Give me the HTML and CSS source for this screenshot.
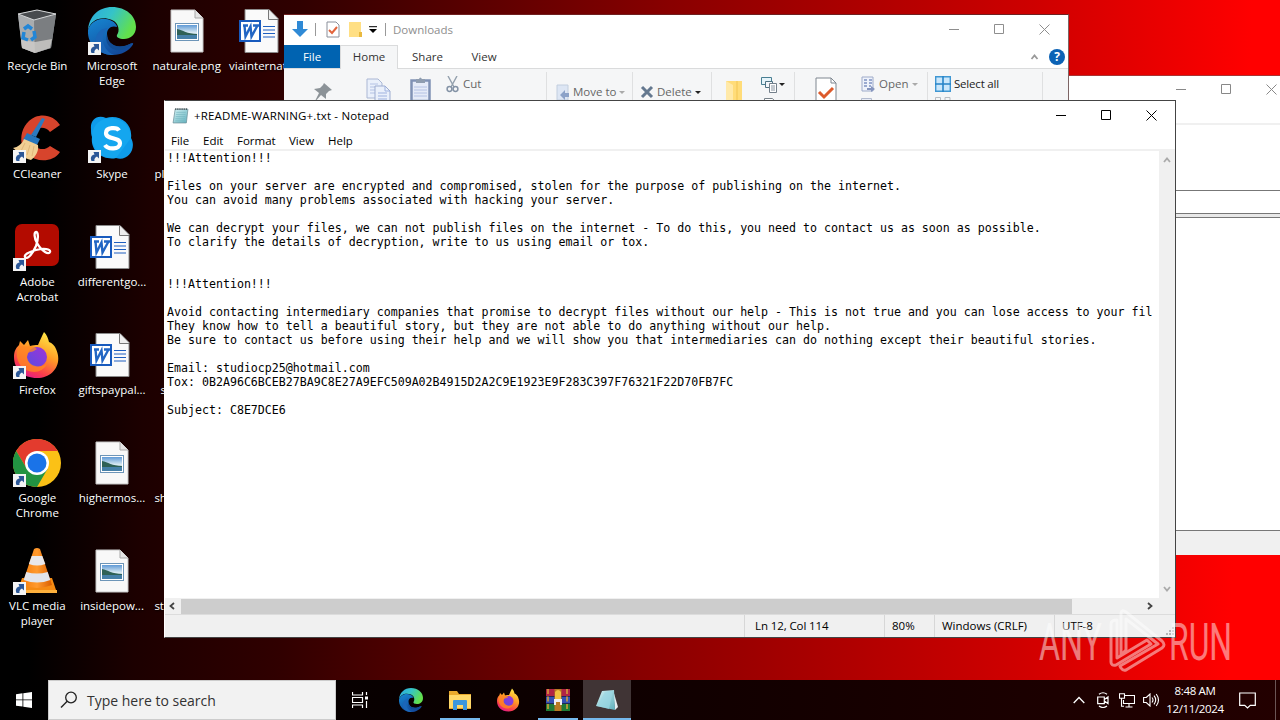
FILE: index.html
```html
<!DOCTYPE html>
<html lang="en">
<head>
    <meta charset="UTF-8">
    <meta name="viewport" content="width=device-width, initial-scale=1.0">
    <title>Desktop</title>
    <link rel="stylesheet" href="styles.css">
</head>
<body>
    <!-- Shared icons -->
    <svg class="defs" width="0" height="0">
        <defs>
            <linearGradient id="edgeTop" x1="0" y1="0" x2="1" y2="0.4">
                <stop offset="0" stop-color="#2aa9e0"/><stop offset=".5" stop-color="#35c3c8"/><stop offset="1" stop-color="#62e04c"/>
            </linearGradient>
            <linearGradient id="edgeLow" x1="0" y1="0" x2="0.6" y2="1">
                <stop offset="0" stop-color="#1687d2"/><stop offset="1" stop-color="#134a9c"/>
            </linearGradient>
            <linearGradient id="fox" x1="0.8" y1="0" x2="0.3" y2="1">
                <stop offset="0" stop-color="#fff04a"/><stop offset=".45" stop-color="#ff9a26"/><stop offset=".8" stop-color="#fa3c4c"/><stop offset="1" stop-color="#e01a8c"/>
            </linearGradient>
            <linearGradient id="foxCore" x1="0" y1="1" x2="1" y2="0">
                <stop offset="0" stop-color="#5a4be0"/><stop offset="1" stop-color="#a033d8"/>
            </linearGradient>
            <linearGradient id="sky" x1="0" y1="0" x2="0" y2="1">
                <stop offset="0" stop-color="#5f9ad6"/><stop offset=".55" stop-color="#dcebf2"/><stop offset="1" stop-color="#8fb6cf"/>
            </linearGradient>
            <linearGradient id="cone" x1="0" y1="0" x2="1" y2="0">
                <stop offset="0" stop-color="#f57c0c"/><stop offset=".5" stop-color="#ff9a2e"/><stop offset="1" stop-color="#d95d00"/>
            </linearGradient>
            <linearGradient id="pad" x1="0" y1="0" x2="1" y2="1">
                <stop offset="0" stop-color="#d6f3f5"/><stop offset="1" stop-color="#5fb0bd"/>
            </linearGradient>
        </defs>
        <symbol id="i-shortcut" viewBox="0 0 13 13">
            <rect width="13" height="13" fill="#f4f4f4"/>
            <path d="M3.500 11C2 7.500 3.500 5 6.500 4.500L5.500 2H11v6.500L9 6.500C7 7.500 6 9 6.500 11z" fill="#2b5797"/>
        </symbol>
        <symbol id="i-edge" viewBox="0 0 48 48">
            <path d="M24 0C38 0 48 9 48 20c0 8-6 12-12 12-5 0-8-2-7-4 3-4 2-12-5-15C14 9 3 12 0 23 1 9 11 0 24 0z" fill="url(#edgeTop)"/>
            <path d="M0 23C3 13 15 9 24 14c3 1.700 5 4 5 6-6-2-10 2-10 7 0 10 10 17 25 9 1 0 1.500.5 1 1.500C41 44 33 48 25 48 10 48-1 37 0 23z" fill="url(#edgeLow)"/>
            <path d="M20 21C11 28 14 43 26 48 14 49 6 41 8 31c1-6 6-10 12-10z" fill="#1b66b8"/>
            <path d="M19 27c0 10 10 17 25 9-4 6-12 9-19 6-6-3-8-9-6-15z" fill="#124b92"/>
        </symbol>
        <symbol id="i-firefox" viewBox="0 0 46 48">
            <path d="M30 1c3 3 4 6 5 10 3 1 6 4 7 7 7 15-3 29-19 29C9 47 0 38 0 26 0 20 2 17 5 14l1-4 4 4 4-5 2 6c3-1 5-1 8-1 2-5 4-9 6-13z" fill="url(#fox)"/>
            <circle cx="23" cy="26" r="10" fill="url(#foxCore)"/>
            <path d="M4 16c4-1 8 0 12-1 3 0 5 2 7 3-2 1-4 3-7 3-3 1-3 4-3 6 2 8 12 11 20 6-4 8-13 10-21 6C4 35 1 25 4 16z" fill="#ff8a22" opacity=".75"/>
        </symbol>
        <symbol id="i-png" viewBox="0 0 34 44">
            <path d="M1 1h24l8 8v34H1z" fill="#f8f8f8" stroke="#c6c6c6"/>
            <path d="M25 1v8h8" fill="#e4e4e4" stroke="#a9a9a9"/>
            <rect x="5.500" y="14.500" width="23" height="17" fill="#fff" stroke="#6d95b8"/>
            <rect x="7" y="16" width="20" height="14" fill="url(#sky)"/>
            <path d="M7 20c6 1 10 5 20 5v2H7z" fill="#2f6156"/>
            <path d="M7 26l20 0v4H7z" fill="#4680a8"/>
        </symbol>
        <symbol id="i-word" viewBox="0 0 40 44">
            <path d="M6 .5h24l9 9V43.500H6z" fill="#fafafa" stroke="#8b8b8b"/>
            <path d="M29.500.5v10H39" fill="#eee" stroke="#777"/>
            <path d="M24 17.500h12M24 21h12M24 24.500h12M24 28h12" stroke="#1e5fbf" stroke-width="1.200"/>
            <rect x="1" y="12" width="20" height="20" fill="#fff" stroke="#185abd" stroke-width="2"/>
            <path d="M4 16.500h5M5.500 16.500l1 11 5-10 1 10 6-11M14 16.500h6" fill="none" stroke="#2266c4" stroke-width="2.400"/>
        </symbol>
        <symbol id="i-notepad" viewBox="0 0 16 16">
            <path d="M3 2h12l-1.500 13H1z" fill="url(#pad)" stroke="#6c8f98" stroke-width=".7"/>
            <path d="M4 5h9M3.700 7h9M3.500 9h9M3.200 11h9M3 13h9" stroke="#74b5be" stroke-width=".6"/>
            <path d="M3 2h12" stroke="#454f52" stroke-width="1.800" stroke-dasharray="1 1"/>
        </symbol>
        <symbol id="i-min" viewBox="0 0 11 11"><path d="M0 5.500h10" stroke="currentColor"/></symbol>
        <symbol id="i-max" viewBox="0 0 11 11"><path d="M.5.500h9v9H.5z" fill="none" stroke="currentColor"/></symbol>
        <symbol id="i-close" viewBox="0 0 11 11"><path d="M.5.500l10 10M10.500.500l-10 10" stroke="currentColor"/></symbol>
        <symbol id="i-up" viewBox="0 0 8 6"><path d="M1 5l3-3.500L7 5" fill="none" stroke="currentColor" stroke-width="1.800"/></symbol>
    </svg>

    <div class="desktop">
        <!-- Desktop icons, filled column by column -->
        <div class="icons">
            <div class="item">
                <div class="pic"><svg width="48" height="48" viewBox="0 -2 48 48">
                    <path d="M5 5l19-4 19 4-5 34-16 5-13-5z" fill="#8c8f92"/>
                    <path d="M5 6l16 4 1 34-13-5z" fill="#a9acae"/>
                    <path d="M21 10l22-5-5 34-16 5z" fill="#7b7e81"/>
                    <path d="M5 5l19-4 19 4-22 6z" fill="#484b4e" stroke="#d5d7d8"/>
                    <path d="M8 31l14 2 17-3-2 9-15 5-13-5z" fill="#d0cdc9" opacity=".8"/>
                    <path d="M11 20l4-3 4 3M21 22l1 6-4 3M15 31l-5-2 1-6" fill="none" stroke="#2386d6" stroke-width="3.500"/>
                </svg></div>
                <span>Recycle Bin</span>
            </div>
            <div class="item">
                <div class="pic"><svg width="48" height="48" viewBox="0 0 48 48">
                    <path d="M47 10L37 17C31 9 18 13 19 24c1 10 12 13 18 7l10 6C40 48 23 47 15 40 3 29 8 8 22 2c10-4 20 0 25 8z" fill="#d7442c"/>
                    <path d="M29 3l3 1-9 18-5-2z" fill="#2c7ac0"/>
                    <path d="M14 18l13 6-3 6-14-5z" fill="#2676bd"/>
                    <path d="M11 24l14 6c1 7-3 12-7 15C11 44 5 37 0 33c5-1 9-4 11-9z" fill="#f1cf94"/>
                    <path d="M12 28l-4 8M17 30l-3 10M21 31l-2 10" stroke="#e0b67a"/>
                </svg><svg class="arrow"><use href="#i-shortcut"/></svg></div>
                <span>CCleaner</span>
            </div>
            <div class="item">
                <div class="pic"><svg width="48" height="48" viewBox="0 0 48 48">
                    <rect x="2" y="1" width="44" height="42" rx="7" fill="#b30b00"/>
                    <path d="M12 34c2 3 7-2 11-11 3-8 2-14 0-14s-2 6 1 11c5 9 12 12 13 9s-6-4-14-2-12 5-11 7z" fill="none" stroke="#fff" stroke-width="2.300"/>
                </svg><svg class="arrow"><use href="#i-shortcut"/></svg></div>
                <span>Adobe<br>Acrobat</span>
            </div>
            <div class="item">
                <div class="pic"><svg width="46" height="48"><use href="#i-firefox"/></svg><svg class="arrow"><use href="#i-shortcut"/></svg></div>
                <span>Firefox</span>
            </div>
            <div class="item">
                <div class="pic"><svg width="48" height="48" viewBox="0 0 48 48">
                    <circle cx="24" cy="24" r="24" fill="#fbc116"/>
                    <path d="M3.200 12A24 24 0 0 1 44.800 12H24L14 30z" fill="#e33b2e"/>
                    <path d="M3.200 12A24 24 0 0 0 24 48L34.500 30H14z" fill="#229342"/>
                    <circle cx="24" cy="24" r="12" fill="#fff"/>
                    <circle cx="24" cy="24" r="9.500" fill="#1a73e8"/>
                </svg><svg class="arrow"><use href="#i-shortcut"/></svg></div>
                <span>Google<br>Chrome</span>
            </div>
            <div class="item">
                <div class="pic"><svg width="48" height="48" viewBox="0 0 48 48">
                    <path d="M9 31h30l5 15H4z" fill="#f58a12"/>
                    <path d="M4 43h40v3H4z" fill="#ffb13d"/>
                    <path d="M21 2q3-2 6 0l12 36q-15 6-30 0z" fill="url(#cone)"/>
                    <path d="M18.700 9h10.600l3 8q-8 3-16.400 0z" fill="#e8e8ec"/>
                    <path d="M13.300 25q10.700 3 21.400 0l2.600 8q-13 5-26.600 0z" fill="#e2e4ea"/>
                </svg><svg class="arrow"><use href="#i-shortcut"/></svg></div>
                <span>VLC media<br>player</span>
            </div>

            <div class="item">
                <div class="pic"><svg width="48" height="48"><use href="#i-edge"/></svg><svg class="arrow"><use href="#i-shortcut"/></svg></div>
                <span>Microsoft<br>Edge</span>
            </div>
            <div class="item">
                <div class="pic"><svg width="48" height="48" viewBox="0 0 48 48">
                    <path d="M3 14C2 5 9-1 18 3c14-4 27 6 25 20 6 10-3 24-15 20C15 46 2 36 4 22 3 20 3 17 3 14z" fill="#0e9bea"/>
                    <path d="M4 20C5 9 13 3 24 3c11 1 19 9 19 20L28 43C14 45 3 34 4 20z" fill="#19aef2" opacity=".6"/>
                    <path d="M31 15.500C29 12 18 12 18 18c0 7 14 3.500 14 10.500 0 6-12 6.500-15 1.500" fill="none" stroke="#fff" stroke-width="4.200"/>
                </svg><svg class="arrow"><use href="#i-shortcut"/></svg></div>
                <span>Skype</span>
            </div>
            <div class="item"><div class="pic file word"><svg width="40" height="44"><use href="#i-word"/></svg></div><span>differentgo...</span></div>
            <div class="item"><div class="pic file word"><svg width="40" height="44"><use href="#i-word"/></svg></div><span>giftspaypal...</span></div>
            <div class="item"><div class="pic file"><svg width="34" height="44"><use href="#i-png"/></svg></div><span>highermos...</span></div>
            <div class="item"><div class="pic file"><svg width="34" height="44"><use href="#i-png"/></svg></div><span>insidepow...</span></div>

            <div class="item"><div class="pic file"><svg width="34" height="44"><use href="#i-png"/></svg></div><span>naturale.png</span></div>
            <div class="item cut"><div class="pic"></div><span>pl</span></div>
            <div class="item cut"><div class="pic"></div></div>
            <div class="item cut narrow"><div class="pic"></div><span>s</span></div>
            <div class="item cut"><div class="pic"></div><span>sh</span></div>
            <div class="item cut"><div class="pic"></div><span>st</span></div>

            <div class="item cut"><div class="pic file word"><svg width="40" height="44"><use href="#i-word"/></svg></div><span>viainternat</span></div>
        </div>

        <!-- Window behind everything -->
        <div class="window back-window">
            <div class="titlebar">
                <div class="controls">
                    <svg><use href="#i-min"/></svg><svg><use href="#i-max"/></svg><svg><use href="#i-close"/></svg>
                </div>
            </div>
            <div class="back-tools"></div>
            <div class="back-field"></div>
            <div class="back-gap"></div>
            <div class="back-list"></div>
            <div class="back-status"></div>
        </div>

        <!-- File Explorer -->
        <div class="window explorer">
            <div class="titlebar">
                <svg class="dl" width="18" height="18" viewBox="0 0 18 18"><path d="M6 1h6v8h5l-8 8-8-8h5z" fill="#2f8ad6"/></svg>
                <i class="bar"></i>
                <svg class="check" width="14" height="17" viewBox="0 0 14 17"><path d="M1 1h9l3 3v12H1z" fill="#fff" stroke="#8a8f9a"/><path d="M3 9l3 3 5-6" fill="none" stroke="#e2643c" stroke-width="2"/></svg>
                <svg class="fold" width="14" height="17" viewBox="0 0 14 17"><path d="M1 1h12v15H1z" fill="#ffdf84"/><path d="M11 11h3v5h-3z" fill="#e9b93f"/></svg>
                <svg class="more" width="8" height="8" viewBox="0 0 8 8"><path d="M0 .7h8" stroke="#000"/><path d="M0 3h8L4 7z" fill="#000"/></svg>
                <i class="bar"></i>
                <span class="title">Downloads</span>
                <div class="controls">
                    <svg><use href="#i-min"/></svg><svg><use href="#i-max"/></svg><svg><use href="#i-close"/></svg>
                </div>
            </div>
            <div class="tabs">
                <span class="tab file-tab">File</span>
                <span class="tab active">Home</span>
                <span class="tab share">Share</span>
                <span class="tab">View</span>
                <div class="help">
                    <svg class="up" width="9" height="6"><use href="#i-up"/></svg>
                    <b>?</b>
                </div>
            </div>
            <div class="ribbon">
                <div class="group clipboard">
                    <svg width="20" height="22" viewBox="0 0 20 22"><path d="M11 1l8 7-3 1-3 3 0 5-5-4-7 8 5-10-5-4 6-1 3-3z" fill="#8c9398"/></svg>
                    <svg class="copy" width="25" height="24" viewBox="0 0 25 24"><path d="M1 1h11l4 4v15H1z" fill="#eaf0fb" stroke="#aab7d4"/><path d="M4 6h8M4 9h9M4 12h9M4 15h9" stroke="#b4c2e4"/><path d="M9 8h10l5 5v11H9z" fill="#eaf0fb" stroke="#9dacd0"/><path d="M19 8v5h5M12 15h9M12 18h9M12 21h9" fill="none" stroke="#9fb2df"/></svg>
                    <svg class="paste" width="21" height="24" viewBox="0 0 21 24"><path d="M1.500 3.500h18V24h-18z" fill="#e5ebf8" stroke="#8092b5" stroke-width="2.500"/><path d="M6 2h3q1-3 3 0h3v4H6z" fill="#8f9db0"/><path d="M4 10h13M4 13h13M4 16h13M4 19h13" stroke="#b4c2e4"/></svg>
                    <svg class="scissors" width="13" height="17" viewBox="0 0 13 17"><path d="M2 0l6 11M11 0L5 11" stroke="#93a0ad" stroke-width="1.400"/><circle cx="3.500" cy="13" r="2.400" fill="none" stroke="#8493a6" stroke-width="1.500"/><circle cx="9.500" cy="13" r="2.400" fill="none" stroke="#8493a6" stroke-width="1.500"/></svg>
                    <span>Cut</span>
                </div>
                <div class="group move low">
                    <svg width="14" height="17" viewBox="0 0 14 17"><path d="M1 1h11v15H1z" fill="#dde6f4" stroke="#c2cede"/><path d="M13 9H9V6l-5 5 5 5v-3h4z" fill="#8ca2c8"/></svg>
                    <span>Move to</span><i class="caret pale"></i>
                </div>
                <div class="group delete low">
                    <svg width="14" height="14" viewBox="0 0 14 14"><path d="M2 2l10 10M12 2L2 12" stroke="#64788f" stroke-width="3"/></svg>
                    <span>Delete</span><i class="caret"></i>
                </div>
                <div class="group new">
                    <svg class="newfolder" width="18" height="24" viewBox="0 0 18 24"><path d="M1 2h16v22H1z" fill="#ffdc79"/><path d="M1 2l7 4v18H1z" fill="#ffe9a9"/><path d="M12 2v22" stroke="#f2c555"/></svg>
                    <div class="stack">
                        <div class="row"><svg width="16" height="17" viewBox="0 0 16 17"><path d="M.5 1.500h10v7H.5z" fill="#e6f4fa" stroke="#487e92"/><path d="M4.500 5.500h7v6h-7z" fill="#f3f6fa" stroke="#4f7282"/><path d="M8.500 7.500h7v9h-7z" fill="#fff" stroke="#74808b"/><path d="M10 10h4M10 12h4M10 14h4" stroke="#8894a0"/></svg><i class="caret"></i></div>
                        <svg class="stub" width="12" height="4" viewBox="0 0 12 4"><path d="M.5 4V.5h8L11.500 4" fill="#fff" stroke="#78828a"/></svg>
                    </div>
                </div>
                <div class="group open">
                    <svg class="props" width="22" height="25" viewBox="0 0 22 25"><path d="M1 1h15l5 5v19H1z" fill="#fff" stroke="#7e8790"/><path d="M16 1v5h5" fill="none" stroke="#7e8790"/><path d="M4 15l5 5 9-9" fill="none" stroke="#dd5a2b" stroke-width="3"/></svg>
                    <div class="stack">
                        <div class="row"><svg width="14" height="17" viewBox="0 0 14 17"><path d="M1 1h11v14H1z" fill="#eef2fb" stroke="#9eabc9"/><path d="M3 4h3M8 4h3M3 7h3M8 7h3M3 10h3M8 10h2" stroke="#7f92c2" stroke-width="1.600"/><path d="M6 12h4v-2l4 3-4 3v-2H6z" fill="#8494bd"/></svg><span>Open</span><i class="caret pale"></i></div>
                        <svg class="stub" width="12" height="4" viewBox="0 0 12 4"><path d="M.5 4V.5h10V4" fill="#e8ecf6" stroke="#b3bccf"/></svg>
                    </div>
                </div>
                <div class="group select">
                    <div class="stack">
                        <div class="row"><svg width="16" height="16" viewBox="0 0 16 16"><path d="M.7.700h14.600v14.600H.7z" fill="#cbe7fb" stroke="#3f97d3" stroke-width="1.400"/><path d="M8 0v16M0 8h16" stroke="#2784c8" stroke-width="1.600"/></svg><span>Select all</span></div>
                        <svg class="stub" width="16" height="4" viewBox="0 0 16 4"><path d="M.5 4V.5h5V4M10 4V.5h5V4" fill="none" stroke="#b9bdc2"/></svg>
                    </div>
                </div>
            </div>
        </div>

        <!-- Notepad -->
        <div class="window notepad">
            <div class="titlebar">
                <svg class="app" width="17" height="17"><use href="#i-notepad"/></svg>
                <span class="title">+README-WARNING+.txt - Notepad</span>
                <div class="controls">
                    <svg><use href="#i-min"/></svg><svg><use href="#i-max"/></svg><svg><use href="#i-close"/></svg>
                </div>
            </div>
            <div class="menu">
                <span class="m-file">File</span><span class="m-edit">Edit</span><span class="m-format">Format</span><span class="m-view">View</span><span>Help</span>
            </div>
            <div class="editor">
<pre class="text">!!!Attention!!!

Files on your server are encrypted and compromised, stolen for the purpose of publishing on the internet.
You can avoid many problems associated with hacking your server.

We can decrypt your files, we can not publish files on the internet - To do this, you need to contact us as soon as possible.
To clarify the details of decryption, write to us using email or tox.


!!!Attention!!!

Avoid contacting intermediary companies that promise to decrypt files without our help - This is not true and you can lose access to your fil
They know how to tell a beautiful story, but they are not able to do anything without our help.
Be sure to contact us before using their help and we will show you that intermediaries can do nothing except their beautiful stories.

Email: studiocp25@hotmail.com
Tox: 0B2A96C6BCEB27BA9C8E27A9EFC509A02B4915D2A2C9E1923E9F283C397F76321F22D70FB7FC

Subject: C8E7DCE6</pre>
                <div class="vscroll">
                    <svg width="8" height="6"><use href="#i-up"/></svg>
                    <svg class="down" width="8" height="6"><use href="#i-up"/></svg>
                </div>
            </div>
            <div class="hscroll">
                <svg class="left" width="8" height="6"><use href="#i-up"/></svg>
                <div class="thumb"></div>
                <svg class="right" width="8" height="6"><use href="#i-up"/></svg>
            </div>
            <div class="statusbar">
                <span class="s-pos">Ln 12, Col 114</span>
                <span class="s-zoom">80%</span>
                <span class="s-eol">Windows (CRLF)</span>
                <span class="s-enc">UTF-8</span>
                <svg class="grip" width="10" height="10" viewBox="0 0 10 10"><path d="M7 1h2M4 4h2M7 4h2M1 7h2M4 7h2M7 7h2" stroke="#b5b5b5" stroke-width="2"/></svg>
            </div>
        </div>

        <!-- Watermark -->
        <svg class="watermark" width="220" height="66" viewBox="1030 608 220 66">
            <g fill="#fff">
                <text x="1039" y="660" textLength="63" lengthAdjust="spacingAndGlyphs">ANY</text>
                <text x="1169" y="660" textLength="63" lengthAdjust="spacingAndGlyphs">RUN</text>
            </g>
            <g fill="none" stroke="#fff" stroke-width="3" stroke-linejoin="round">
                <path d="M1121 655V613q1-4 5-1l36 29q4 4 0 7l-36 22q-3 1-5-2l-1-2 38-22-32-25v31z"/>
                <path d="M1117 620q-6 0-6 4v38q0 4 5 3l35-21-4-4-30 18z"/>
            </g>
        </svg>

        <!-- Taskbar -->
        <div class="taskbar">
            <div class="start">
                <svg width="16" height="16" viewBox="0 0 16 16"><path d="M0 2.200l6.500-.9v6.200H0zM7.300 1.200L16 0v7.500H7.300zM0 8.300h6.500v6.300L0 13.700zM7.300 8.300H16V16l-8.700-1.200z" fill="#fff"/></svg>
            </div>
            <div class="search">
                <svg width="18" height="18" viewBox="0 0 18 18"><circle cx="11" cy="6.500" r="5.300" fill="none" stroke="#222" stroke-width="1.300"/><path d="M7.200 10.300L1 16.500" stroke="#222" stroke-width="1.400"/></svg>
                <span>Type here to search</span>
            </div>
            <div class="task view">
                <svg width="16" height="16" viewBox="0 0 16 16"><path d="M.5 0v3h10V0M.5 16v-3h10v3M.5 5.500h10v5H.5zM14.500 0v3M14.500 9v7" fill="none" stroke="#fff" stroke-width="1.200"/><path d="M13 4.500h3v3h-3z" fill="#fff"/></svg>
            </div>
            <div class="task"><svg width="24" height="24"><use href="#i-edge"/></svg></div>
            <div class="task running">
                <svg width="22" height="20" viewBox="0 0 22 20"><path d="M0 1h8l2 3h12v15H0z" fill="#e9a92c"/><path d="M0 5h22v13H0z" fill="#ffd869"/><path d="M4 11q0-1 1-1h12q1 0 1 1v9h-4v-5H8v5H4z" fill="#3b96dc"/></svg>
            </div>
            <div class="task"><svg width="23" height="24"><use href="#i-firefox"/></svg></div>
            <div class="task running">
                <svg width="24" height="22" viewBox="0 0 24 22"><path d="M0 0h24v7H0z" fill="#b02446"/><path d="M0 7.500h24v7H0z" fill="#3350b4"/><path d="M0 15h24v7H0z" fill="#1f7a37"/><path d="M2 0v22M21 0v22" stroke="#d8a53a" stroke-width="1.500" stroke-dasharray="5 2.500"/><path d="M8.500 0h7v22h-7z" fill="#b87923"/><path d="M9 3q3-4 6 0v7H9z" fill="#f0c040"/><path d="M8 10h8v6h-2v-3h-4v3H8z" fill="#eee"/></svg>
            </div>
            <div class="task running current">
                <svg width="24" height="23" viewBox="0 0 24 23"><path d="M18 1l5 17-3 3z" fill="#e7edf0"/><path d="M7 2L19 1l1 20L1 17z" fill="url(#pad)"/><path d="M10 3l8-1-4 18-12-3z" fill="#9bd7e4" opacity=".7"/></svg>
            </div>
            <div class="tray">
                <svg width="12" height="8" viewBox="0 0 12 8"><path d="M.7 7L6 1.500 11.300 7" fill="none" stroke="#fff" stroke-width="1.300"/></svg>
                <svg class="cam" width="12" height="16" viewBox="0 0 12 16"><path d="M.7 5h6.600v6.600H.7zM7.300 7.500L11 5v6.600L7.300 9M2 2.300Q6-.8 10 2.300M2 14q4 3 8 0" fill="none" stroke="#fff" stroke-width="1.200"/></svg>
                <svg class="net" width="16" height="15" viewBox="0 0 16 15"><path d="M6 2.500h9.500v8H4.500V7M10 10.500v3M6.500 14h7M.5.700h5v4.600h-5zM2.500 5.300v8H5" fill="none" stroke="#fff" stroke-width="1.100"/></svg>
                <svg class="vol" width="17" height="14" viewBox="0 0 17 14"><path d="M.6 4.500h2.700L7 1v12L3.300 9.500H.6zM9 4.500q2 2.500 0 5M11 2.700q3.400 4.300 0 8.600M13.200 1q4.600 6 0 12" fill="none" stroke="#fff" stroke-width="1.100"/></svg>
                <div class="clock"><span>8:48 AM</span><span>12/11/2024</span></div>
                <svg class="note" width="17" height="17" viewBox="0 0 17 17"><path d="M.7 1h15.600v12.300h-5L8.500 16l-2.800-2.700h-5z" fill="none" stroke="#fff" stroke-width="1.200"/></svg>
            </div>
        </div>
    </div>
</body>
</html>
```
FILE: styles.css
```css
* {
    box-sizing: border-box;
}

body {
    margin: 0;
    font-family: "Open Sans", "Noto Sans", sans-serif;
    font-size: 11.5px;
    color: #000;
}

svg {
    display: block;
    flex-shrink: 0;
}

.defs {
    position: absolute;
}

.desktop {
    position: relative;
    width: 1280px;
    height: 720px;
    overflow: hidden;
    background: linear-gradient(92deg, #000 4%, #1c0000 12%, #300000 23%, #880000 51%, #d00000 80%, #f00000 91%, #ff0000 96%);
}

/* Desktop icons */
.icons {
    display: grid;
    grid-auto-flow: column;
    grid-template-rows: repeat(6, 108px);
    grid-auto-columns: 74.7px;
    padding-top: 7px;
    width: 340px;
    color: #fff;
}

.item {
    display: flex;
    flex-direction: column;
    align-items: center;
    text-align: center;
    line-height: 15px;
    white-space: nowrap;
    text-shadow: 0 1px 2px #000;
}

.pic {
    position: relative;
    display: flex;
    justify-content: center;
    width: 48px;
    height: 48px;
    margin-bottom: 3px;
}

.file {
    padding-top: 2px;
}

.word {
    padding-right: 4px;
}

.arrow {
    position: absolute;
    left: 0;
    bottom: 0;
    width: 13px;
    height: 13px;
}

.cut > span {
    align-self: flex-start;
    padding-left: 5px;
}

.narrow > span {
    padding-left: 11px;
}

/* Windows */
.window {
    position: absolute;
    display: flex;
    flex-direction: column;
    background: #fff;
}

.titlebar {
    display: flex;
    align-items: center;
    height: 29px;
    flex-shrink: 0;
}

.controls {
    display: flex;
    gap: 34px;
    margin-left: auto;
}

.controls svg {
    width: 11px;
    height: 11px;
}

.back-window {
    left: 900px;
    top: 75px;
    width: 380px;
    height: 480px;
    border-top: 1px solid #a33;
    color: #888;
}

.back-window .titlebar {
    height: 27px;
    padding-right: 3px;
}

.back-tools {
    height: 68px;
    margin-top: 20px;
    border-top: 2px solid #f0f0f0;
    border-bottom: 1px solid #777;
    flex-shrink: 0;
}

.back-field {
    height: 23px;
    border-bottom: 1px solid #777;
}

.back-gap {
    height: 3px;
    background: #e8e8e8;
}

.back-list {
    flex: 1;
    border-top: 1px solid #777;
    border-bottom: 1px solid #777;
}

.back-status {
    height: 24px;
    background: #f0f0f0;
}

/* File Explorer */
.explorer {
    left: 284px;
    top: 14px;
    width: 785px;
    height: 400px;
    border: 1px solid #7d6565;
    border-top-color: #702020;
    border-left: 0;
}

.explorer .titlebar {
    height: 30px;
    padding: 0 18px 2px 7px;
    color: #8e8e8e;
}

.bar {
    width: 1px;
    height: 13px;
    background: #999;
}

.dl {
    margin-right: 6px;
}

.check {
    margin-left: 10px;
}

.fold {
    margin-left: 8px;
}

.more {
    margin: 2px 8px 0 7px;
}

.explorer .title {
    margin-left: 7px;
    font-size: 11.5px;
}

.tabs {
    display: flex;
    height: 24px;
    line-height: 24px;
    flex-shrink: 0;
    border-bottom: 1px solid #dadbdc;
    color: #333;
}

.tab {
    width: 56px;
    text-align: center;
}

.file-tab {
    background: #0063b1;
    color: #fff;
    height: 23px;
    width: 56px;
}

.tab.active {
    width: 58px;
    height: 24px;
    background: #f5f6f7;
    border: 1px solid #dadbdc;
    border-bottom: 0;
    line-height: 22px;
}

.share {
    width: 57px;
    margin-left: 1px;
}

.help {
    display: flex;
    align-items: center;
    gap: 10px;
    margin-left: auto;
    padding-right: 3px;
    color: #999;
}

.help b {
    width: 16px;
    height: 16px;
    border-radius: 50%;
    background: #0b62b5;
    color: #fff;
    font-size: 12px;
    line-height: 16px;
    text-align: center;
}

.ribbon {
    display: flex;
    flex: 1;
    padding-top: 3px;
    background: #f5f6f7;
    color: #666;
}

.group {
    display: flex;
    align-items: flex-start;
    height: 90px;
    border-right: 1px solid #dfe0e1;
}

.clipboard {
    width: 263px;
    padding-left: 29px;
}

.clipboard > svg:first-child {
    margin-top: 10px;
}

.copy {
    margin: 6px 0 0 33px;
}

.paste {
    margin: 5px 0 0 19px;
}

.scissors {
    margin: 4px 0 0 15px;
}

.clipboard span {
    margin: 4px 0 0 4px;
}

.low {
    padding-top: 12px;
}

.low svg {
    margin-right: 3px;
}

.move {
    width: 86px;
    padding-left: 9px;
}

.delete {
    width: 79px;
    padding-left: 7px;
}

.delete svg {
    margin-top: 1px;
    margin-right: 3px;
}

.caret {
    border: 3px solid transparent;
    border-top-color: #222;
    border-bottom: 0;
    margin: 7px 0 0 3px;
}

.caret.pale {
    border-top-color: #aaa;
}

.new {
    width: 83px;
    padding-left: 13px;
}

.newfolder {
    margin-top: 7px;
}

.stack {
    display: flex;
    flex-direction: column;
}

.row {
    display: flex;
    margin-top: 4px;
}

.row span {
    margin-left: 4px;
}

.stub {
    margin-top: 5px;
}

.new .stack {
    margin-left: 18px;
}

.new .caret {
    margin-left: 2px;
}

.new .stub {
    margin-left: 3px;
}

.open {
    width: 133px;
    padding-left: 20px;
}

.props {
    margin-top: 5px;
}

.open .stack {
    margin-left: 24px;
}

.select {
    width: 115px;
    padding-left: 7px;
}

.select span {
    margin-left: 3px;
    color: #222;
    letter-spacing: -0.2px;
}

/* Notepad */
.notepad {
    left: 164px;
    top: 100px;
    width: 1012px;
    height: 538px;
    border: 1px solid #444;
    border-left-color: #fff;
}

.notepad .titlebar {
    padding: 0 18px 0 7px;
}

.notepad .title {
    margin-left: 5px;
    letter-spacing: 0.17px;
}

.menu {
    display: flex;
    height: 21px;
    line-height: 22px;
    padding-left: 6px;
    border-bottom: 2px solid #f0f0f0;
    flex-shrink: 0;
}

.m-file {
    width: 32px;
}

.m-edit {
    width: 34px;
}

.m-format {
    width: 52px;
}

.m-view {
    width: 39px;
}

.editor {
    display: flex;
    flex-shrink: 0;
    height: 447px;
}

.text {
    flex: 1;
    margin: 0;
    padding-left: 2px;
    overflow: hidden;
    font-family: "DejaVu Sans Mono", monospace;
    font-size: 11.625px;
    line-height: 14px;
}

.vscroll {
    display: flex;
    flex-direction: column;
    justify-content: space-between;
    align-items: center;
    width: 16px;
    padding: 6px 1px 6px 0;
    background: #f0f0f0;
    color: #aaa;
}

.down {
    transform: rotate(180deg);
}

.hscroll {
    display: flex;
    flex-shrink: 0;
    align-items: center;
    height: 16px;
    padding: 0 21px 0 3px;
    background: #f0f0f0;
    color: #444;
}

.thumb {
    width: 891px;
    height: 15px;
    margin-left: 5px;
    background: #cdcdcd;
}

.left {
    transform: rotate(-90deg);
}

.right {
    margin-left: auto;
    transform: rotate(90deg);
}

.statusbar {
    position: relative;
    display: flex;
    justify-content: flex-end;
    flex: 1;
    padding-right: 1px;
    line-height: 22px;
    background: #f0f0f0;
    border-top: 1px solid #dcdcdc;
}

.statusbar span {
    padding-left: 7px;
    border-left: 1px solid #d7d7d7;
}

.statusbar .s-pos {
    width: 140px;
    padding-left: 10px;
    letter-spacing: -0.1px;
}

.s-zoom {
    width: 50px;
}

.s-eol {
    width: 120px;
}

.s-enc {
    width: 120px;
}

.grip {
    position: absolute;
    right: 0;
    bottom: 0;
}

/* Watermark */
.watermark {
    position: absolute;
    left: 1030px;
    top: 608px;
    opacity: 0.48;
}

.watermark text {
    font-family: Roboto, sans-serif;
    font-size: 52px;
    font-weight: 400;
}

/* Taskbar */
.taskbar {
    position: absolute;
    left: 0;
    bottom: 0;
    display: flex;
    width: 1280px;
    height: 40px;
    background: linear-gradient(90deg, #000 0%, #080000 30%, #150000 65%, #230000 100%);
    color: #fff;
}

.start {
    display: flex;
    align-items: center;
    justify-content: center;
    width: 48px;
}

.search {
    display: flex;
    align-items: center;
    width: 288px;
    padding-left: 11px;
    background: #f2f2f2;
    border: 1px solid #ccc;
    color: #333;
    font-size: 14px;
}

.search span {
    margin-left: 9px;
}

.task {
    display: flex;
    align-items: center;
    justify-content: center;
    width: 49px;
    border-bottom: 0 solid #76b9ed;
}

.view {
    width: 50px;
    padding-right: 2px;
}

.running {
    width: 40px;
    margin: 0 4px 0 5px;
    padding-top: 2px;
    border-bottom-width: 2px;
}

.current {
    width: 48px;
    margin: 0 0 0 1px;
    background: #403435;
}

.tray {
    display: flex;
    align-items: center;
    width: 203px;
    margin-left: auto;
    margin-right: 4px;
    border-right: 1px solid #6b5555;
}

.cam {
    margin-left: 12px;
}

.net {
    margin-left: 10px;
}

.vol {
    margin-left: 8px;
}

.clock {
    display: flex;
    flex-direction: column;
    align-items: center;
    width: 70px;
    line-height: 18px;
    letter-spacing: -0.35px;
}

.note {
    margin-left: 9px;
}
```
